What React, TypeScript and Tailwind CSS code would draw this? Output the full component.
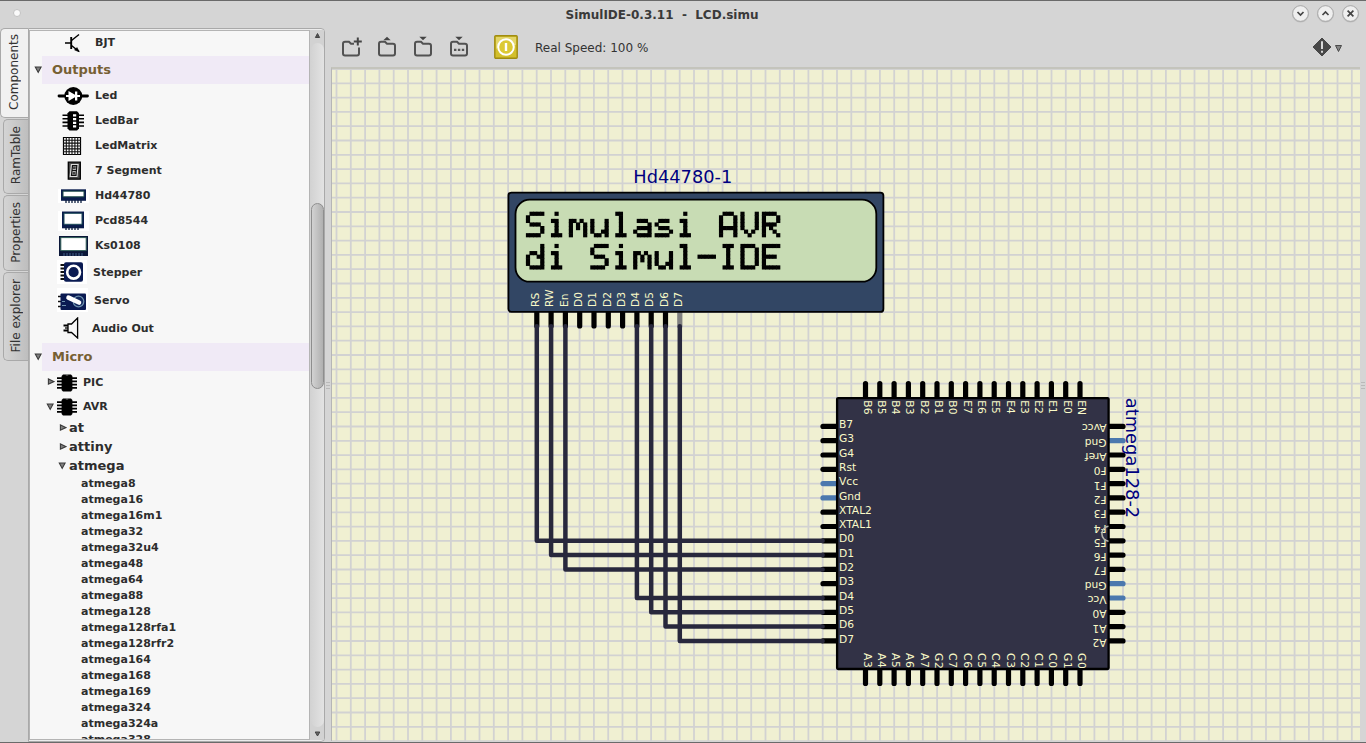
import React from 'react';

const P = 14.3;

const GLYPHS: Record<string, string[]> = {
  S: ['01111', '10000', '10000', '01110', '00001', '00001', '11110'],
  i: ['00100', '00000', '01100', '00100', '00100', '00100', '01110'],
  m: ['00000', '00000', '11010', '10101', '10101', '10001', '10001'],
  u: ['00000', '00000', '10001', '10001', '10001', '10011', '01101'],
  l: ['01100', '00100', '00100', '00100', '00100', '00100', '01110'],
  a: ['00000', '00000', '01110', '00001', '01111', '10001', '01111'],
  s: ['00000', '00000', '01110', '10000', '01110', '00001', '11110'],
  d: ['00001', '00001', '01101', '10011', '10001', '10001', '01111'],
  A: ['01110', '10001', '10001', '10001', '11111', '10001', '10001'],
  V: ['10001', '10001', '10001', '10001', '10001', '01010', '00100'],
  R: ['11110', '10001', '10001', '11110', '10100', '10010', '10001'],
  I: ['01110', '00100', '00100', '00100', '00100', '00100', '01110'],
  D: ['11110', '10001', '10001', '10001', '10001', '10001', '11110'],
  E: ['11111', '10000', '10000', '11110', '10000', '10000', '11111'],
  '-': ['00000', '00000', '00000', '11111', '00000', '00000', '00000'],
};

function LcdLine({ text, x, y }: { text: string; x: number; y: number }) {
  const u = 3.575;
  return (
    <g fill="#000" role="img" aria-label={text}>
      {text.split('').flatMap((ch, c) =>
        (GLYPHS[ch] ?? []).flatMap((row, r) =>
          row.split('').map((bit, k) =>
            bit === '1' ? (
              <rect key={`${c}-${r}-${k}`} x={x - 0.3 + c * 6 * u + k * u} y={y - 0.3 + r * u} width={u + 0.6} height={u + 0.6} />
            ) : null,
          ),
        ),
      )}
    </g>
  );
}

const LCD_PINS = ['RS', 'RW', 'En', 'D0', 'D1', 'D2', 'D3', 'D4', 'D5', 'D6', 'D7'];
const LEFT = ['B7', 'G3', 'G4', 'Rst', 'Vcc', 'Gnd', 'XTAL2', 'XTAL1', 'D0', 'D1', 'D2', 'D3', 'D4', 'D5', 'D6', 'D7'];
const TOP = ['B6', 'B5', 'B4', 'B3', 'B2', 'B1', 'B0', 'E7', 'E6', 'E5', 'E4', 'E3', 'E2', 'E1', 'E0', 'EN'];
const RIGHT = ['Avcc', 'Gnd', 'Aref', 'F0', 'F1', 'F2', 'F3', 'F4', 'F5', 'F6', 'F7', 'Gnd', 'Vcc', 'A0', 'A1', 'A2'];
const BOTTOM = ['A3', 'A4', 'A5', 'A6', 'A7', 'G2', 'C7', 'C6', 'C5', 'C4', 'C3', 'C2', 'C1', 'C0', 'G1', 'G0'];
const WIRES = [[0, 8], [1, 9], [2, 10], [7, 12], [8, 13], [9, 14], [10, 15]];

const pinColor = (n: string) => (n === 'Vcc' || n === 'Gnd' ? '#4b78ae' : '#000');

function Schematic() {
  const px = 865.5;
  const py = 426.4;
  const lx = 536.8;
  return (
    <svg width="1028" height="672" viewBox="332 69 1028 672" className="block font-['DejaVu_Sans',sans-serif]">
      <rect x="332" y="69" width="1028" height="672" fill="#f0f0d2" />
      <g stroke="#d2d2d2" strokeWidth="1.8">
        {Array.from({ length: 72 }, (_, i) => (
          <line key={i} x1={336.5 + i * P} x2={336.5 + i * P} y1="69" y2="741" />
        ))}
        {Array.from({ length: 48 }, (_, i) => (
          <line key={i} y1={69 + i * P} y2={69 + i * P} x1="332" x2="1360" />
        ))}
      </g>

      <g strokeWidth="5.2" strokeLinecap="round">
        {LCD_PINS.map((n, i) => (
          <line key={n} x1={lx + i * P} x2={lx + i * P} y1="312" y2="326" stroke={i === 10 ? '#808080' : '#000'} />
        ))}
        {LEFT.map((n, i) => (
          <line key={n} x1="823" x2="837" y1={py + i * P} y2={py + i * P} stroke={pinColor(n)} />
        ))}
        {RIGHT.map((n, i) => (
          <line key={i} x1="1109" x2="1123" y1={py + i * P} y2={py + i * P} stroke={pinColor(n)} />
        ))}
        {TOP.map((n, i) => (
          <line key={n} x1={px + i * P} x2={px + i * P} y1="383.5" y2="398" stroke="#000" />
        ))}
        {BOTTOM.map((n, i) => (
          <line key={n} x1={px + i * P} x2={px + i * P} y1="669" y2="683.5" stroke="#000" />
        ))}
      </g>

      <rect x="508.4" y="192.6" width="375" height="119.3" rx="3" fill="#324664" stroke="#000" strokeWidth="1.8" />
      <rect x="515.5" y="199.7" width="360.8" height="82" rx="14.3" fill="#c8dcb4" stroke="#000" strokeWidth="1.8" />
      <LcdLine text="Simulasi AVR" x={526.2} y={212} />
      <LcdLine text="di Simul-IDE" x={526.2} y={244.2} />
      <text x="633.3" y="183" fontSize="17.8" fill="#000080">Hd44780-1</text>
      <g fontSize="10.7" fill="#fafac8">
        {LCD_PINS.map((n, i) => (
          <text key={n} transform={`translate(${lx + 2.2 + i * P} 307) rotate(-90)`}>{n}</text>
        ))}
      </g>

      <g stroke="#28283c" strokeWidth="4.5" strokeLinecap="round" strokeLinejoin="round" fill="none">
        {WIRES.map(([a, b]) => (
          <polyline key={a} points={`${lx + a * P},326.2 ${lx + a * P},${py + b * P} 822.6,${py + b * P}`} />
        ))}
      </g>

      <rect x="837.1" y="398.1" width="271.5" height="270.9" rx="1" fill="#323246" stroke="#000" strokeWidth="2.3" />
      <g fontSize="10.7" fill="#fafac8">
        {LEFT.map((n, i) => (
          <text key={n} x="839" y={Math.round(428 + i * P)}>{n}</text>
        ))}
        {RIGHT.map((n, i) => (
          <text key={i} transform={`translate(1106.6 ${424.4 + i * P}) rotate(180)`}>{n}</text>
        ))}
        {TOP.map((n, i) => (
          <text key={n} transform={`translate(${px - 2 + i * P} 400.3) rotate(90)`}>{n}</text>
        ))}
        {BOTTOM.map((n, i) => (
          <text key={n} letterSpacing="0.8" transform={`translate(${px - 2 + i * P} 653) rotate(90)`}>{n}</text>
        ))}
      </g>
      <path d="M1108.5 526.3A7.5 7.5 0 0 0 1108.5 541.2" fill="none" stroke="#b6b6ae" strokeWidth="1.5" />
      <text transform="translate(1126.3 397.8) rotate(90)" fontSize="17.85" fill="#000080">atmega128-2</text>
    </svg>
  );
}

function Arrow({ open }: { open?: boolean }) {
  return (
    <svg width="8" height="8" viewBox="0 0 8 8" className="shrink-0">
      <path d={open ? 'M1.3 1H7.1L4.2 6.4Z' : 'M1.4 1V6.2L6.8 3.6Z'} fill="#808080" stroke="#3a3a3a" strokeWidth="1.1" />
    </svg>
  );
}

function Chip() {
  return (
    <svg width="20" height="18" viewBox="0 0 20 18">
      <path d="M0 4.2H20M0 7.4H20M0 10.6H20M0 13.8H20" stroke="#000" strokeWidth="1.7" />
      <path d="M4.6 2L6 .5H14L15.4 2V16L14 17.5H6L4.6 16Z" />
      <path d="M8.8 .5h2.4v.9h-2.4z" fill="#999" />
    </svg>
  );
}

const ICONS: Record<string, React.ReactNode> = {
  BJT: (
    <svg width="32" height="20" viewBox="0 0 32 20" fill="none" stroke="#000" strokeWidth="1.5">
      <path d="M8 10H14M22 1.5L14.5 7.5M14.5 12.5L22 18.5" />
      <path d="M14.2 4V16" strokeWidth="1.9" />
      <path d="M17.5 17L22.3 18.8L20 14.5Z" fill="#000" strokeWidth=".5" />
    </svg>
  ),
  Led: (
    <svg width="32" height="20" viewBox="0 0 32 20">
      <path d="M2 10H30.5" stroke="#000" strokeWidth="2.8" strokeLinecap="round" />
      <circle cx="16.3" cy="10" r="9" />
      <path d="M11.5 5L18 8.8V5.5H20.3V14.5H18V11.2L11.5 15V11H9V9H11.5ZM20.3 9H23V11H20.3Z" fill="#fff" />
    </svg>
  ),
  LedBar: (
    <svg width="32" height="20" viewBox="0 0 32 20">
      <path d="M5.5 4.2H27M5.5 7.8H27M5.5 11.4H27M5.5 15H27" stroke="#000" strokeWidth="1.6" />
      <path d="M10.5 2.3L12.5 .3H20L22 2.3V17.5L20 19.5H12.5L10.5 17.5Z" />
      <path d="M16 3.3h3.2v2.3H16zM16 7h3.2v2.3H16zM16 10.7h3.2V13H16zM16 14.3h3.2v2.3H16z" fill="#fff" />
    </svg>
  ),
  LedMatrix: (
    <svg width="32" height="20" viewBox="0 0 32 20">
      <path d="M6.5 1.5h17v17h-17z" fill="#fff" stroke="#000" strokeWidth="1.2" />
      <path d="M9.3 1v18M12.1 1v18M15 1v18M17.9 1v18M20.7 1v18M6 4.3h18M6 7.1h18M6 10h18M6 12.9h18M6 15.7h18" stroke="#111" strokeWidth="1.1" />
    </svg>
  ),
  '7 Segment': (
    <svg width="32" height="20" viewBox="0 0 32 20">
      <path d="M11.3 1.2h12v17h-12z" fill="#444" stroke="#000" strokeWidth="1.3" />
      <path d="M15 4.2H20.3L19.3 14.8H14Z M14.5 9.5H19.8" fill="none" stroke="#ddd" strokeWidth="2.6" />
      <path d="M15.5 4.6H19.8L19 14.4H14.5Z M14.8 9.5H19.5" fill="none" stroke="#111" strokeWidth="1.2" />
    </svg>
  ),
  Hd44780: (
    <svg width="32" height="20" viewBox="-1 0 32 20">
      <path d="M0 3h31v14H0z" fill="#fff" />
      <path d="M3 3.3h25v11.5H3z" fill="#0a1c4c" />
      <path d="M5 5.2h21v5.6H5z" fill="#fff" stroke="#1c4a48" />
      <path d="M8 14v3M11 14v3M14 14v3M17 14v3M20 14v3M23 14v3" stroke="#0a1c3c" strokeWidth="1.3" />
    </svg>
  ),
  Pcd8544: (
    <svg width="32" height="20" viewBox="-1 0 32 20">
      <path d="M0 0h31v20H0z" fill="#fff" />
      <path d="M4 .5h22v16.8H4z" fill="#0a1c4c" />
      <path d="M6 2.3h18v11H6z" fill="#fff" stroke="#1c4a58" />
      <path d="M8 16v3M11 16v3M14 16v3M17 16v3M20 16v3" stroke="#0a1c3c" strokeWidth="1.3" />
    </svg>
  ),
  Ks0108: (
    <svg width="32" height="22" viewBox="-1 0 32 22">
      <path d="M1 1h29v20H1z" fill="#0a1638" />
      <path d="M2.8 2.6h25.4v13H2.8z" fill="#fff" stroke="#315f58" />
      <path d="M6 18v3M9 18v3M12 18v3M15 18v3M18 18v3M21 18v3M24 18v3" stroke="#4d6f9b" strokeWidth=".8" />
    </svg>
  ),
  Stepper: (
    <svg width="30" height="24" viewBox="0 0 30 24">
      <path d="M0 0h30v24H0z" fill="#fff" />
      <path d="M3.5 5H8M3.5 8.5H8M3.5 12H8M3.5 15.5H8M3.5 19H8" stroke="#111" strokeWidth="2" />
      <rect x="7" y="2.3" width="19" height="19.4" rx="2" fill="#0a1a52" />
      <circle cx="16.6" cy="12.2" r="6.4" fill="#0a1a52" stroke="#fff" strokeWidth="2.6" />
    </svg>
  ),
  Servo: (
    <svg width="31" height="24" viewBox="0 0 31 24">
      <path d="M0 0h31v24H0z" fill="#fff" />
      <path d="M1 8.5H7M1 13.5H7M1 18.5H7" stroke="#111" strokeWidth="1.4" />
      <rect x="3.5" y="5.5" width="25.5" height="16.5" rx="1" fill="#0a1a52" />
      <circle cx="21.5" cy="13.5" r="5.3" fill="#14295e" stroke="#6d91ad" strokeWidth="1.2" />
      <path d="M11.5 9.7L22 14.5" stroke="#fff" strokeWidth="4.6" strokeLinecap="round" />
      <path d="M5 13.5h3M5 17.5h4" stroke="#6d91ad" />
    </svg>
  ),
  'Audio Out': (
    <svg width="30" height="22" viewBox="0 0 30 22" fill="none" stroke="#000" strokeWidth="1.3">
      <path d="M11 7H14.5L20.6 1V21L14.5 15.5H11Z" />
      <path d="M6.5 8.5H11M6.5 13.5H11" strokeWidth="1.8" />
      <path d="M8 11H11" />
    </svg>
  ),
};

const OUTPUTS: [string, string][] = [
  ['Led', 'h-[25px]'], ['LedBar', 'h-[25px]'], ['LedMatrix', 'h-[25px]'], ['7 Segment', 'h-[25px]'],
  ['Hd44780', 'h-[25px]'], ['Pcd8544', 'h-[25px]'], ['Ks0108', 'h-[25px]'],
  ['Stepper', 'h-7'], ['Servo', 'h-7'], ['Audio Out', 'h-7'],
];
const LABEL_X: Record<string, string> = { 'Audio Out': 'pl-[5px]' };

const MEGAS = ['8', '16', '16m1', '32', '32u4', '48', '64', '88', '128', '128rfa1', '128rfr2', '164', '168', '169', '324', '324a', '328'];

function Item({ name, height }: { name: string; height: string }) {
  return (
    <div className={`flex items-center pl-[27px] ${height}`}>
      <span className="pb-[2px]">{ICONS[name]}</span>
      <span className={LABEL_X[name] ?? 'pl-[6px]'}>{name}</span>
    </div>
  );
}

function Header({ name }: { name: string }) {
  return (
    <div className="flex h-7 items-center pl-[4px]">
      <Arrow open />
      <div className="flex h-7 flex-1 items-center bg-[#f0eaf6] pl-[10px] text-[13px] text-[#776033]">{name}</div>
    </div>
  );
}

function Tree() {
  return (
    <div className="w-[281px] overflow-hidden border border-[#b4b4b4] bg-[#f7f7f7] text-[11px] font-bold text-[#2d2d2d]">
      <Item name="BJT" height="h-[25px]" />
      <Header name="Outputs" />
      {OUTPUTS.map(([n, h]) => <Item key={n} name={n} height={h} />)}
      <Header name="Micro" />
      <div className="flex h-6 items-center pl-[17px]"><span className="pb-[2px]"><Arrow /></span><span className="pb-px pl-[2px]"><Chip /></span><span className="pl-[6px]">PIC</span></div>
      <div className="flex h-6 items-center pl-[16px]"><Arrow open /><span className="pb-px pl-[3px]"><Chip /></span><span className="pl-[6px]">AVR</span></div>
      <div className="flex h-[19px] items-center gap-[2px] pb-[2px] pl-[29px] text-[13px]"><Arrow />at</div>
      <div className="flex h-[19px] items-center gap-[2px] pb-[2px] pl-[29px] text-[13px]"><Arrow />attiny</div>
      <div className="flex h-[19px] items-center gap-[3px] pb-[2px] pl-[28px] text-[13px]"><Arrow open />atmega</div>
      {MEGAS.map((m) => <div key={m} className="h-4 pl-[51px] leading-4">atmega{m}</div>)}
    </div>
  );
}

function Tab({ name, className }: { name: string; className: string }) {
  return (
    <div className={`flex items-center justify-center rounded-l-[5px] border border-r-0 border-[#a9a9a9] ${className}`}>
      <span className="rotate-180 text-[12px] leading-none text-[#333] [writing-mode:vertical-rl]">{name}</span>
    </div>
  );
}

function Folder({ kind }: { kind: 'new' | 'up' | 'down' | 'dots' }) {
  return (
    <svg width="22" height="22" viewBox="0 0 22 22" fill="none" stroke="#525252" strokeWidth="2">
      {kind === 'new' ? (
        <path d="M12 7.7H9L7 5.7H3Q1 5.7 1 7.7V17.5Q1 19.5 3 19.5H15Q17 19.5 17 17.5V11.5" />
      ) : (
        <path d="M1 17.5V7.7Q1 5.7 3 5.7H7L9 7.7H15Q17 7.7 17 9.7V17.5Q17 19.5 15 19.5H3Q1 19.5 1 17.5Z" />
      )}
      {kind === 'new' && <path d="M15.8 1.5V9.5M11.8 5.5H19.8" stroke="#444" />}
      {kind === 'up' && <path d="M5.3 4.3L9 .7L12.7 4.3Z" fill="#444" stroke="none" />}
      {(kind === 'down' || kind === 'dots') && <path d="M5.3 .7L9 4.3L12.7 .7Z" fill="#444" stroke="none" />}
      {kind === 'dots' && <path d="M4 12.7h2.4v2.4H4zM7.9 12.7h2.4v2.4H7.9zM11.8 12.7h2.4v2.4h-2.4z" fill="#555" stroke="none" />}
    </svg>
  );
}

function WinButton({ d }: { d: string }) {
  return (
    <svg width="19" height="19" viewBox="0 0 19 19">
      <circle cx="9.5" cy="9.8" r="8.6" fill="#bdbdbd" />
      <circle cx="9.5" cy="9.5" r="7.8" fill="#efefef" stroke="#999" strokeWidth=".7" />
      <path d={d} fill="none" stroke="#444" strokeWidth="1.7" />
    </svg>
  );
}

function Grip() {
  return (
    <div className="flex w-[4px] flex-col gap-[2px]">
      <div className="h-px bg-[#b9b9b9]" />
      <div className="h-px bg-[#b9b9b9]" />
      <div className="h-px bg-[#b9b9b9]" />
    </div>
  );
}

export default function App() {
  return (
    <div className="flex h-[743px] w-[1366px] flex-col overflow-hidden border-y border-[#6a6a6a] bg-[#d5d5d5] font-['DejaVu_Sans',sans-serif] text-[#333]">
      <header className="flex h-[27px] shrink-0 items-center">
        <div className="mb-[3px] ml-[13px] size-[8px] rounded-full border border-[#c2c2c2] bg-[#fafafa]" />
        <h1 className="flex-1 whitespace-pre pl-[12px] text-center text-[12px] font-bold text-[#3a3a3a]">SimulIDE-0.3.11  -  LCD.simu</h1>
        <div className="mr-[6px] flex gap-[6px] pb-[2px]">
          <WinButton d="M6.5 8L9.5 11L12.5 8" />
          <WinButton d="M6.5 11L9.5 8L12.5 11" />
          <WinButton d="M6.6 6.6L12.4 12.4M12.4 6.6L6.6 12.4" />
        </div>
      </header>

      <div className="flex min-h-0 flex-1">
        <nav className="flex w-7 shrink-0 flex-col items-end">
          <Tab name="Components" className="h-[90px] w-[28px] bg-[#f1f1f1] pr-px pb-[2px]" />
          <Tab name="RamTable" className="mt-px h-[75px] w-[25px] bg-linear-to-r from-[#d4d4d4] to-[#bebebe] pr-px pb-[2px]" />
          <Tab name="Properties" className="mt-px h-[76px] w-[25px] bg-linear-to-r from-[#d4d4d4] to-[#bebebe] pr-px pb-[2px]" />
          <Tab name="File explorer" className="mt-px h-[89px] w-[25px] bg-linear-to-r from-[#d4d4d4] to-[#bebebe] pr-px pb-[2px]" />
        </nav>

        <aside className="flex h-[714px] w-[297px] shrink-0 rounded-r-[4px] border border-[#a9a9a9] bg-[#ececec] pt-px pb-px">
          <Tree />
          <div className="flex flex-1 flex-col items-center bg-[#d2d2d2]">
            <svg width="13" height="13" viewBox="0 0 13 13"><path d="M4.4 7.5L6.5 3.5L8.6 7.5Z" fill="#555" stroke="#444" /></svg>
            <div className="w-[13px] flex-1 rounded-full bg-linear-to-r from-[#d3d3d3] to-[#e3e3e3] pt-[160px]">
              <div className="h-[186px] rounded-full border border-[#8e8e8e] bg-linear-to-r from-[#d2d2d2] to-[#b0b0b0]" />
            </div>
            <svg width="13" height="13" viewBox="0 0 13 13"><path d="M4.2 5L6.5 9L8.8 5Z" fill="#666" stroke="#444" /></svg>
          </div>
        </aside>

        <div className="flex w-[6px] items-center justify-center"><Grip /></div>

        <main className="flex w-[1029px] shrink-0 flex-col">
          <div className="flex h-[39px] items-center pl-[11px]">
            <div className="flex gap-[14px] pb-[2px]">
              <Folder kind="new" />
              <Folder kind="up" />
              <Folder kind="down" />
              <Folder kind="dots" />
            </div>
            <svg width="24" height="24" viewBox="0 0 24 24" className="mb-px ml-[22px]">
              <rect x=".8" y=".8" width="22.4" height="22.4" rx="1" fill="#d3bf2b" stroke="#a08c10" strokeWidth="1.4" />
              <path d="M2 2h20v8Q12 8 2 14Z" fill="#e3d568" />
              <circle cx="12" cy="12" r="7.8" fill="#dcc935" stroke="#fff" strokeWidth="2" />
              <path d="M12 8V16" stroke="#fff" strokeWidth="2.4" />
            </svg>
            <span className="pl-[17px] text-[12px]">Real Speed: 100 %</span>
            <div className="mr-[17px] ml-auto flex items-center gap-[2px] pb-px">
              <svg width="20" height="20" viewBox="0 0 20 20">
                <path d="M10 1L19 10L10 19L1 10Z" fill="#484848" stroke="#484848" strokeLinejoin="round" />
                <path d="M10 4.2V12M10 13.8V15.8" stroke="#e8e8e8" strokeWidth="1.8" />
              </svg>
              <svg width="9" height="9" viewBox="0 0 9 9" className="mt-[3px]"><path d="M1.5 1.5H7.5L4.5 7.5Z" fill="#858585" stroke="#4a4a4a" /></svg>
            </div>
          </div>
          <div className="border-t-2 border-l border-[#b6b6b6] border-t-[#c4c4bc]"><Schematic /></div>
        </main>
        <div className="flex flex-1 items-center justify-center"><Grip /></div>
      </div>
    </div>
  );
}
